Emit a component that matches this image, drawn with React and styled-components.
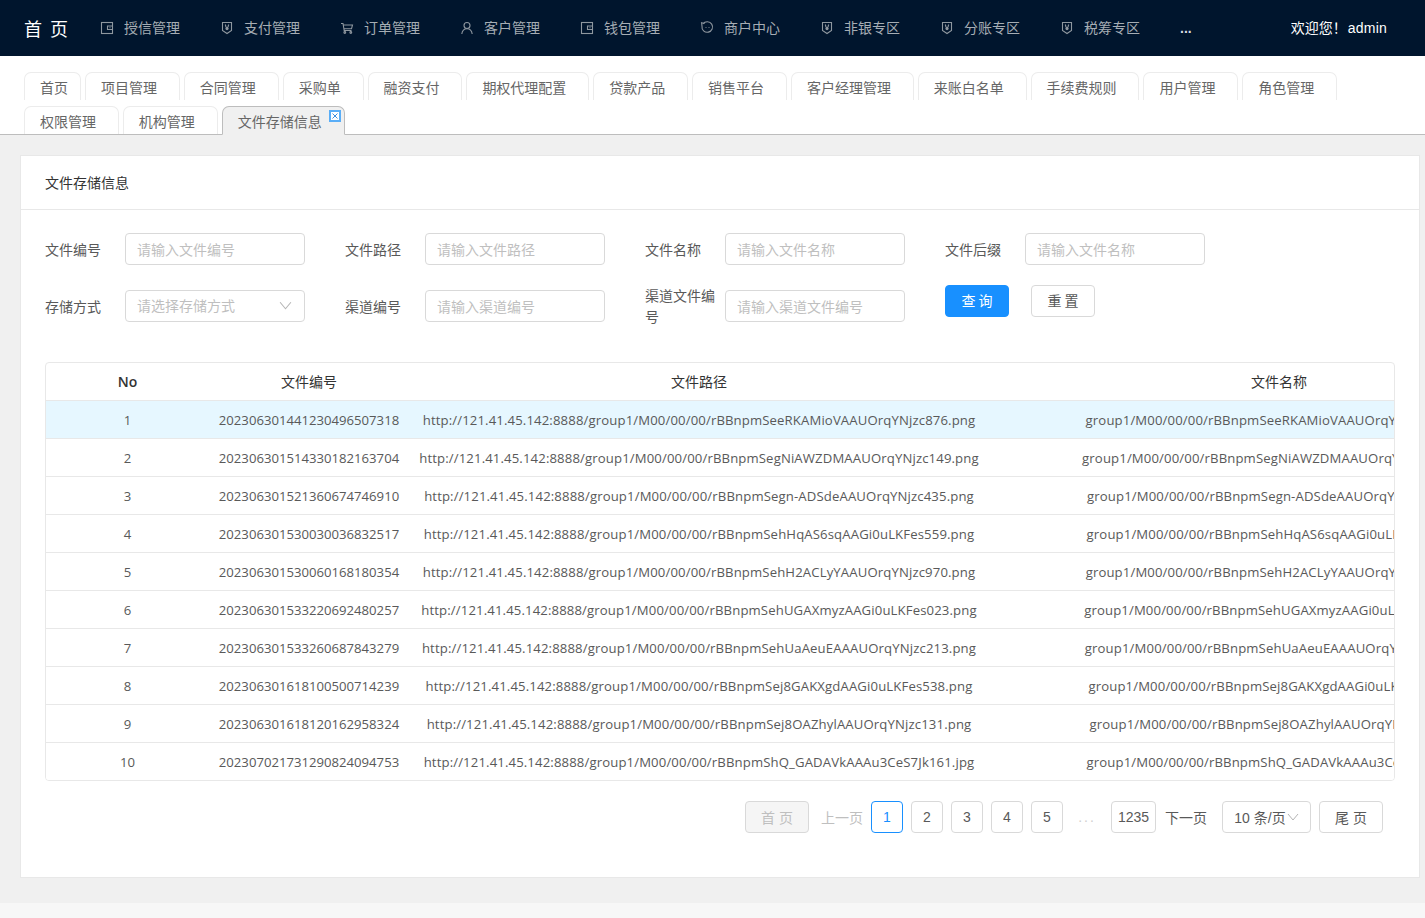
import React from "react";
import styled, { createGlobalStyle } from "styled-components";

const cjk = `"Noto Sans CJK SC", sans-serif`;

const GlobalStyle = createGlobalStyle`
  html, body {
    margin: 0;
    padding: 0;
    background: #f0f0f0;
    font-family: "Liberation Sans", ${cjk};
    font-size: 14px;
    color: #595959;
  }
  * {
    box-sizing: border-box;
  }
`;

const Page = styled.div`
  width: 1425px;
  height: 918px;
  overflow: hidden;
  display: flex;
  flex-direction: column;
`;

const Header = styled.header`
  height: 56px;
  flex: none;
  background: #00152d;
  display: flex;
  align-items: center;
  padding-left: 24px;
  padding-right: 38px;
`;

const Logo = styled.div`
  width: 56px;
  color: #fff;
  font-size: 18px;
  word-spacing: 3px;
  white-space: pre;
`;

const Nav = styled.nav`
  display: flex;
  flex: 1;
  align-items: center;
`;

const NavItem = styled.div`
  width: 120px;
  padding-left: 20px;
  display: flex;
  align-items: center;
  gap: 10px;
  color: #a6adb4;
  white-space: nowrap;
`;

const NavLabel = styled.span`
  margin-bottom: 2px;
`;

const More = styled.div`
  padding-left: 20px;
  color: #d9dde1;
  font-weight: 700;
`;

const Welcome = styled.div`
  color: #fff;
  white-space: pre;
  padding-bottom: 2px;
`;

const AdminName = styled.span`
  margin-left: 1px;
  letter-spacing: 0.2px;
`;

const TabBar = styled.div`
  flex: none;
  height: 79px;
  background: #fff;
  border-bottom: 1px solid #bdbdbd;
  padding: 16px 24px 0;
  display: flex;
  flex-wrap: wrap;
  align-content: flex-start;
  column-gap: 4px;
  row-gap: 6px;
`;

const Tab = styled.div`
  position: relative;
  height: ${(p) => (p.$active ? "29px" : "28px")};
  margin-bottom: ${(p) => (p.$active ? "-1px" : "0")};
  padding: 0 ${(p) => (p.$plain ? "12px" : "21.85px")} 0 15px;
  display: flex;
  align-items: center;
  background: ${(p) => (p.$active ? "#f0f0f0" : "#fff")};
  border: 1px solid ${(p) => (p.$active ? "#bdbdbd" : "#ececec")};
  border-bottom: ${(p) => (p.$active ? "1px solid #f0f0f0" : "none")};
  border-radius: 7px 7px 0 0;
  color: #666;
  white-space: nowrap;
`;

const TabClose = styled.span`
  position: absolute;
  top: 3px;
  right: 3px;
  width: 12px;
  height: 12px;
  border: 2px solid #5aaef7;
  background: #fff;
  display: flex;
  align-items: center;
  justify-content: center;
`;

const Content = styled.main`
  flex: 1;
  padding: 20px 5px 25px 20px;
`;

const Card = styled.section`
  height: 723px;
  background: #fff;
  border: 1px solid #e8e8e8;
`;

const CardTitle = styled.div`
  height: 54px;
  padding: 0 0 2px 24px;
  display: flex;
  align-items: center;
  border-bottom: 1px solid #e8e8e8;
  color: #333;
  font-size: 14px;
`;

const CardBody = styled.div`
  padding: 23px 24px 0;
`;

const FormRow = styled.div`
  display: flex;
  align-items: center;
  min-height: 32px;
  margin-bottom: 20px;
  gap: 40px;
`;

const Field = styled.div`
  display: flex;
  align-items: center;
  width: 260px;
`;

const Label = styled.label`
  width: 80px;
  flex: none;
  margin: 1px 0 -1px;
  padding-right: 10px;
  line-height: 21px;
  color: #595959;
`;

const Input = styled.input`
  width: 180px;
  height: 32px;
  padding: 0 11px;
  border: 1px solid #d9d9d9;
  border-radius: 4px;
  outline: none;
  font-family: ${cjk};
  font-size: 14px;
  color: #595959;
  &::placeholder {
    color: #bfbfbf;
    opacity: 1;
  }
`;

const Select = styled.div`
  width: 180px;
  height: 32px;
  padding: 0 12px 2px 11px;
  border: 1px solid #d9d9d9;
  border-radius: 4px;
  display: flex;
  align-items: center;
  justify-content: space-between;
  color: #bfbfbf;
`;

const Actions = styled.div`
  align-self: flex-start;
  display: flex;
  gap: 22px;
`;

const Button = styled.button`
  width: 64px;
  height: 32px;
  padding: 0 0 2px;
  border: 1px solid ${(p) => (p.$primary ? "#1890ff" : "#d9d9d9")};
  border-radius: 4px;
  background: ${(p) => (p.$primary ? "#1890ff" : "#fff")};
  color: ${(p) => (p.$primary ? "#fff" : "#595959")};
  font-family: ${cjk};
  font-size: 14px;
  white-space: pre;
`;

const TableWrap = styled.div`
  margin-top: 35px;
  height: 419px;
  overflow: hidden;
  border: 1px solid #e8e8e8;
  border-radius: 4px;
`;

const Table = styled.table`
  width: 1523px;
  table-layout: fixed;
  border-collapse: collapse;
  font-family: "Open Sans", ${cjk};
  font-size: 13.15px;
`;

const Th = styled.th`
  height: 37px;
  padding: 0;
  text-align: center;
  color: #333;
  font-weight: ${(p) => (p.$bold ? 600 : 400)};
  font-size: 14px;
  border-bottom: 1px solid #e8e8e8;
`;

const Td = styled.td`
  height: 38px;
  padding: 1px 0 0;
  text-align: center;
  white-space: nowrap;
  color: #595959;
  letter-spacing: ${(p) => (p.$path ? "0.13px" : "0")};
  border-bottom: 1px solid #e8e8e8;
`;

const Row = styled.tr`
  background: ${(p) => (p.$active ? "#e6f7ff" : "#fff")};
`;

const Pagination = styled.div`
  margin-top: 20px;
  padding-right: 12px;
  display: flex;
  justify-content: flex-end;
  align-items: center;
  height: 32px;
`;

const PageBtn = styled.div`
  width: ${(p) => p.$w || 32}px;
  height: 32px;
  margin-left: ${(p) => p.$ml ?? 8}px;
  display: flex;
  align-items: center;
  justify-content: center;
  gap: 1px;
  flex: none;
  border: 1px solid ${(p) => (p.$current ? "#1890ff" : "#d9d9d9")};
  border-radius: 4px;
  background: ${(p) => (p.$disabled ? "#f5f5f5" : "#fff")};
  color: ${(p) => (p.$current ? "#1890ff" : p.$disabled ? "#bfbfbf" : "#595959")};
  white-space: pre;
`;

const PageText = styled.div`
  margin-left: ${(p) => p.$ml}px;
  color: ${(p) => (p.$disabled ? "#bfbfbf" : "#595959")};
  white-space: pre;
`;

const Ellipsis = styled.div`
  width: 48px;
  flex: none;
  text-align: center;
  color: #d0d0d0;
  letter-spacing: 2px;
`;

const Footer = styled.div`
  flex: none;
  height: 15px;
  background: #f7f7f7;
`;

const Icon = styled.svg`
  width: 14px;
  height: 14px;
  flex: none;
  fill: none;
  stroke: #8e979f;
  stroke-width: 1.1;
`;

const WalletIcon = () => (
  <Icon viewBox="0 0 14 14">
    <rect x="1.5" y="1.5" width="11" height="11" />
    <path d="M12.5 5H7.5V8.5H12.5M9.5 6.8H10.5" />
  </Icon>
);

const ShieldIcon = () => (
  <Icon viewBox="0 0 14 14">
    <path d="M2.5 1.5H11.5V9.5L7 12.5L2.5 9.5Z" />
    <path d="M5.3 3.5L6 6M8.7 3.5L8 6" />
    <ellipse cx="7" cy="7.5" rx="1.6" ry="1.8" fill="#8e979f" stroke="none" />
  </Icon>
);

const CartIcon = () => (
  <Icon viewBox="0 0 14 14">
    <path d="M1 2.5H3L4.2 9.5H11.5M3.3 4H12.5L11.5 7.8H4" />
    <circle cx="4.8" cy="11.5" r="0.9" />
    <circle cx="10.8" cy="11.5" r="0.9" />
  </Icon>
);

const UserIcon = () => (
  <Icon viewBox="0 0 14 14">
    <circle cx="7" cy="4.5" r="3" />
    <path d="M1.8 13C2.2 9.8 4.2 7.8 7 7.8C9.8 7.8 11.8 9.8 12.2 13" />
  </Icon>
);

const FaceIcon = () => (
  <Icon viewBox="0 0 14 14">
    <path d="M3 2.8A5.3 5.3 0 1 1 2 5.2C1.9 4.4 1.9 3.4 1.6 1.8C2.6 2.2 3.6 2.2 5 2" />
    <path d="M6 6V6.8M9 6V6.8" />
  </Icon>
);

const Chevron = styled.svg`
  width: ${(p) => p.$size}px;
  height: ${(p) => p.$size}px;
  fill: none;
  stroke: #b5b5b5;
  stroke-width: 1;
  flex: none;
`;

const ChevronDown = ({ size = 13 }) => (
  <Chevron $size={size} viewBox="0 0 12 12">
    <path d="M1 3L6 9L11 3" />
  </Chevron>
);

const navItems = [
  ["授信管理", WalletIcon],
  ["支付管理", ShieldIcon],
  ["订单管理", CartIcon],
  ["客户管理", UserIcon],
  ["钱包管理", WalletIcon],
  ["商户中心", FaceIcon],
  ["非银专区", ShieldIcon],
  ["分账专区", ShieldIcon],
  ["税筹专区", ShieldIcon],
];

const tabs = [
  "项目管理", "合同管理", "采购单", "融资支付", "期权代理配置", "贷款产品", "销售平台",
  "客户经理管理", "来账白名单", "手续费规则", "用户管理", "角色管理", "权限管理", "机构管理",
];

const rows = [
  ["202306301441230496507318", "rBBnpmSeeRKAMioVAAUOrqYNjzc876.png"],
  ["202306301514330182163704", "rBBnpmSegNiAWZDMAAUOrqYNjzc149.png"],
  ["202306301521360674746910", "rBBnpmSegn-ADSdeAAUOrqYNjzc435.png"],
  ["202306301530030036832517", "rBBnpmSehHqAS6sqAAGi0uLKFes559.png"],
  ["202306301530060168180354", "rBBnpmSehH2ACLyYAAUOrqYNjzc970.png"],
  ["202306301533220692480257", "rBBnpmSehUGAXmyzAAGi0uLKFes023.png"],
  ["202306301533260687843279", "rBBnpmSehUaAeuEAAAUOrqYNjzc213.png"],
  ["202306301618100500714239", "rBBnpmSej8GAKXgdAAGi0uLKFes538.png"],
  ["202306301618120162958324", "rBBnpmSej8OAZhylAAUOrqYNjzc131.png"],
  ["202307021731290824094753", "rBBnpmShQ_GADAVkAAAu3CeS7Jk161.jpg"],
];

const App = () => (
  <Page>
    <GlobalStyle />
    <Header>
      <Logo>首 页</Logo>
      <Nav>
        {navItems.map(([label, NavIcon]) => (
          <NavItem key={label}>
            <NavIcon />
            <NavLabel>{label}</NavLabel>
          </NavItem>
        ))}
        <More>...</More>
      </Nav>
      <Welcome>
        欢迎您！<AdminName>admin</AdminName>
      </Welcome>
    </Header>

    <TabBar>
      <Tab $plain>首页</Tab>
      {tabs.map((t) => (
        <Tab key={t}>{t}</Tab>
      ))}
      <Tab $active>
        文件存储信息
        <TabClose>
          <svg width="6" height="6" viewBox="0 0 6 6" fill="none" stroke="#3d8fe0" strokeWidth="1">
            <path d="M0.5 0.5L5.5 5.5M5.5 0.5L0.5 5.5" />
          </svg>
        </TabClose>
      </Tab>
    </TabBar>

    <Content>
      <Card>
        <CardTitle>文件存储信息</CardTitle>
        <CardBody>
          <FormRow>
            <Field>
              <Label>文件编号</Label>
              <Input placeholder="请输入文件编号" />
            </Field>
            <Field>
              <Label>文件路径</Label>
              <Input placeholder="请输入文件路径" />
            </Field>
            <Field>
              <Label>文件名称</Label>
              <Input placeholder="请输入文件名称" />
            </Field>
            <Field>
              <Label>文件后缀</Label>
              <Input placeholder="请输入文件名称" />
            </Field>
          </FormRow>
          <FormRow>
            <Field>
              <Label>存储方式</Label>
              <Select>
                请选择存储方式
                <ChevronDown />
              </Select>
            </Field>
            <Field>
              <Label>渠道编号</Label>
              <Input placeholder="请输入渠道编号" />
            </Field>
            <Field>
              <Label>渠道文件编号</Label>
              <Input placeholder="请输入渠道文件编号" />
            </Field>
            <Actions>
              <Button $primary>查 询</Button>
              <Button>重 置</Button>
            </Actions>
          </FormRow>

          <TableWrap>
            <Table>
              <colgroup>
                <col style={{ width: 163 }} />
                <col style={{ width: 200 }} />
                <col style={{ width: 580 }} />
                <col style={{ width: 580 }} />
              </colgroup>
              <thead>
                <tr>
                  <Th $bold>No</Th>
                  <Th>文件编号</Th>
                  <Th>文件路径</Th>
                  <Th>文件名称</Th>
                </tr>
              </thead>
              <tbody>
                {rows.map(([id, file], i) => (
                  <Row key={id} $active={i === 0}>
                    <Td>{i + 1}</Td>
                    <Td>{id}</Td>
                    <Td $path>{`http://121.41.45.142:8888/group1/M00/00/00/${file}`}</Td>
                    <Td $path>{`group1/M00/00/00/${file}`}</Td>
                  </Row>
                ))}
              </tbody>
            </Table>
          </TableWrap>

          <Pagination>
            <PageBtn $w={64} $ml={0} $disabled>首 页</PageBtn>
            <PageText $ml={12} $disabled>上一页</PageText>
            <PageBtn $current>1</PageBtn>
            <PageBtn>2</PageBtn>
            <PageBtn>3</PageBtn>
            <PageBtn>4</PageBtn>
            <PageBtn>5</PageBtn>
            <Ellipsis>...</Ellipsis>
            <PageBtn $w={45} $ml={0}>1235</PageBtn>
            <PageText $ml={9}>下一页</PageText>
            <PageBtn $w={89} $ml={15}>
              10 条/页
              <ChevronDown size={12} />
            </PageBtn>
            <PageBtn $w={64}>尾 页</PageBtn>
          </Pagination>
        </CardBody>
      </Card>
    </Content>
    <Footer />
  </Page>
);

export default App;
